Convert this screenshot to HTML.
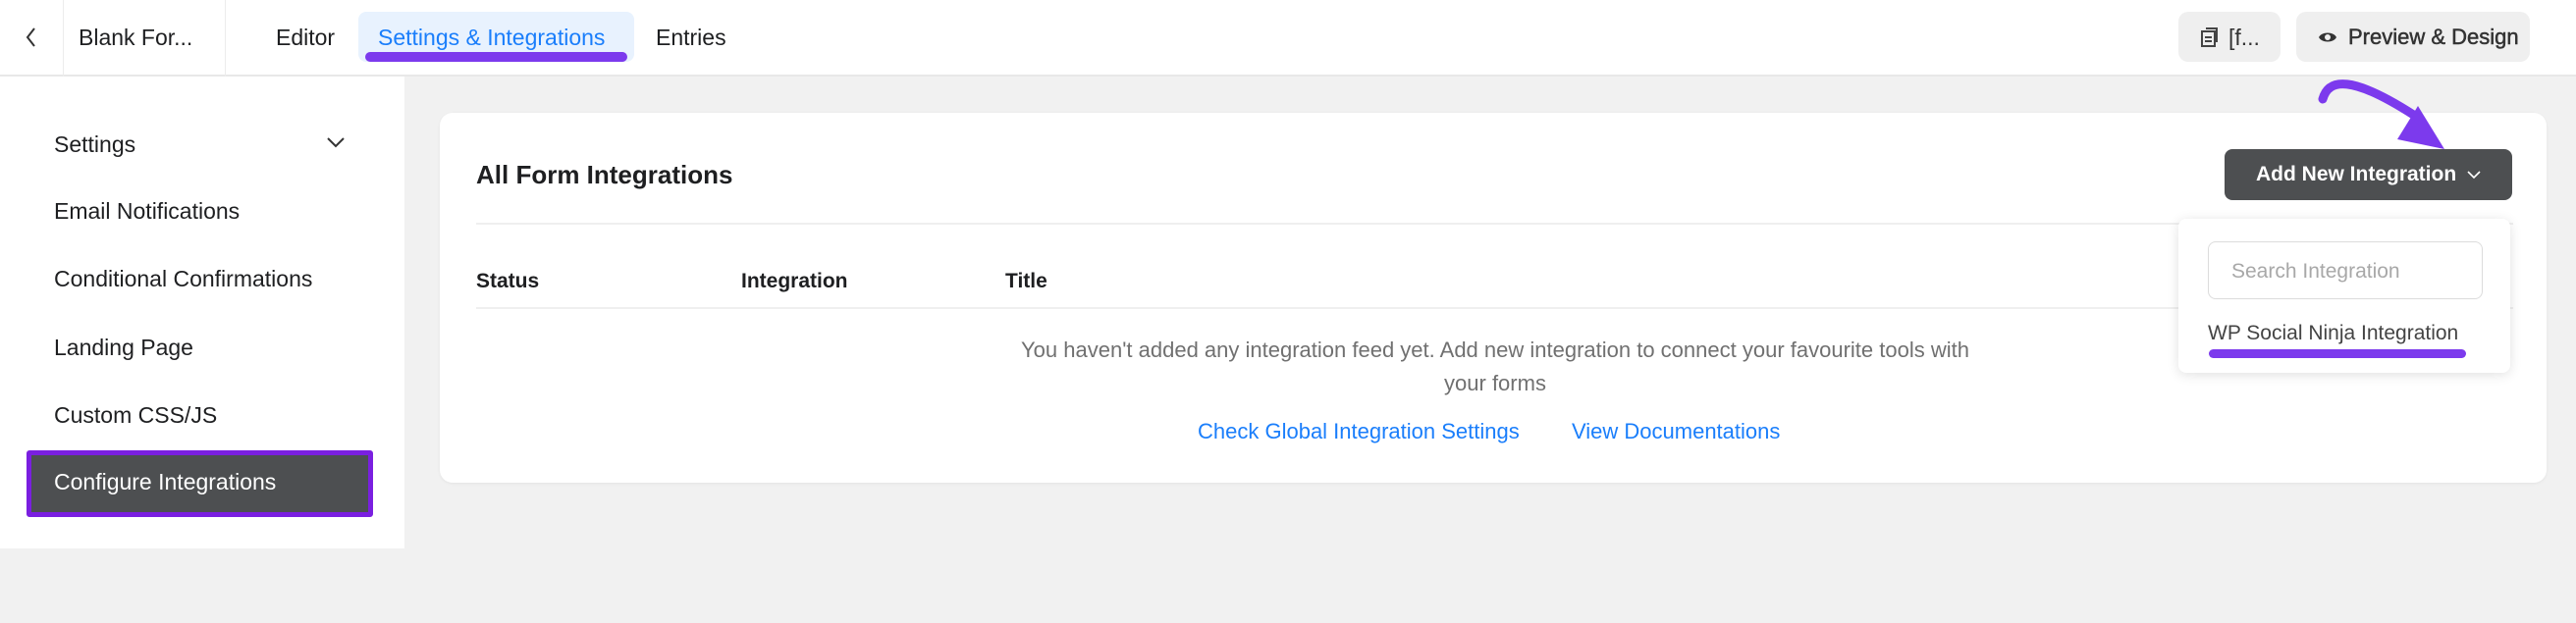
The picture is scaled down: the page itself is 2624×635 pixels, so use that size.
<!DOCTYPE html>
<html><head><meta charset="utf-8"><style>
*{box-sizing:border-box;margin:0;padding:0}
body{width:2624px;height:635px;background:#f1f1f1;font-family:"Liberation Sans",sans-serif;position:relative;overflow:hidden;color:#1e1f21}
.a{position:absolute;white-space:nowrap}
.hdr{position:absolute;left:0;top:0;width:2624px;height:78px;background:#fff;border-bottom:2px solid #e8e8e8}
.t{font-size:23px}
.side{position:absolute;left:0;top:78px;width:412px;height:481px;background:#fff}
.card{position:absolute;left:448px;top:115px;width:2146px;height:377px;background:#fff;border-radius:13px;box-shadow:0 1px 3px rgba(0,0,0,.06)}
.btn{position:absolute;background:#efefef;border-radius:10px}
</style></head><body>
<div class="hdr"></div>
<svg class="a" style="left:24px;top:26px" width="16" height="24" viewBox="0 0 16 24"><path d="M11 3 L4 12 L11 21" fill="none" stroke="#333" stroke-width="2"/></svg>
<div class="a" style="left:64px;top:0;width:1px;height:78px;background:#ececec"></div>
<div class="a" style="left:229px;top:0;width:1px;height:78px;background:#ececec"></div>
<div class="a t" style="left:80px;top:25px;color:#1e1f21">Blank For...</div>
<div class="a t" style="left:281px;top:25px">Editor</div>
<div class="a" style="left:365px;top:12px;width:281px;height:51px;background:#e8f2fe;border-radius:8px"></div>
<div class="a t" style="left:385px;top:25px;color:#1a7efb">Settings &amp; Integrations</div>
<div class="a" style="left:372px;top:53px;width:267px;height:10px;background:#7c3aed;border-radius:5px"></div>
<div class="a t" style="left:668px;top:25px">Entries</div>
<div class="btn" style="left:2219px;top:12px;width:104px;height:51px"></div>
<svg class="a" style="left:2241px;top:26px" width="22" height="24" viewBox="0 0 22 24"><rect x="2" y="6" width="13" height="15" fill="none" stroke="#444" stroke-width="2"/><path d="M6 3h11v14" fill="none" stroke="#444" stroke-width="2"/><path d="M5 12h7M5 16h7" stroke="#444" stroke-width="2"/></svg>
<div class="a t" style="left:2270px;top:25px;color:#333">[f...</div>
<div class="btn" style="left:2339px;top:12px;width:238px;height:51px"></div>
<svg class="a" style="left:2361px;top:30px" width="20" height="16" viewBox="0 0 20 16"><path d="M1 8C4 2 16 2 19 8C16 14 4 14 1 8Z" fill="#333"/><circle cx="10" cy="8" r="3" fill="#efefef"/></svg>
<div class="a t" style="left:2392px;top:25px;color:#333;font-size:22px;-webkit-text-stroke:0.5px #333">Preview &amp; Design</div>

<div class="side"></div>
<div class="a t" style="left:55px;top:134px">Settings</div>
<svg class="a" style="left:332px;top:139px" width="20" height="12" viewBox="0 0 20 12"><path d="M2 2L10 10L18 2" fill="none" stroke="#333" stroke-width="2"/></svg>
<div class="a t" style="left:55px;top:202px">Email Notifications</div>
<div class="a t" style="left:55px;top:271px">Conditional Confirmations</div>
<div class="a t" style="left:55px;top:341px">Landing Page</div>
<div class="a t" style="left:55px;top:410px">Custom CSS/JS</div>
<div class="a" style="left:27px;top:459px;width:353px;height:68px;background:#4d4f51;border:5px solid #7a1fe0;border-radius:3px"></div>
<div class="a t" style="left:55px;top:478px;color:#fff">Configure Integrations</div>

<div class="card"></div>
<div class="a" style="left:485px;top:163px;font-size:26px;font-weight:bold">All Form Integrations</div>
<div class="a" style="left:485px;top:227px;width:2075px;height:2px;background:#efefef"></div>
<div class="a" style="left:485px;top:275px;font-size:21px;font-weight:bold">Status</div>
<div class="a" style="left:755px;top:275px;font-size:21px;font-weight:bold">Integration</div>
<div class="a" style="left:1024px;top:275px;font-size:21px;font-weight:bold">Title</div>
<div class="a" style="left:485px;top:313px;width:2075px;height:2px;background:#efefef"></div>
<div class="a" style="left:1033px;top:340px;width:980px;text-align:center;white-space:normal;font-size:22px;line-height:34px;color:#707070">You haven't added any integration feed yet. Add new integration to connect your favourite tools with your forms</div>
<div class="a" style="left:1220px;top:427px;font-size:22px;color:#1a7efb">Check Global Integration Settings</div>
<div class="a" style="left:1601px;top:427px;font-size:22px;color:#1a7efb">View Documentations</div>

<div class="a" style="left:2266px;top:152px;width:293px;height:52px;background:#4d4f51;border-radius:8px"></div>
<div class="a" style="left:2298px;top:166px;font-size:21px;font-weight:bold;color:#fff">Add New Integration</div>
<svg class="a" style="left:2512px;top:173px" width="16" height="10" viewBox="0 0 16 10"><path d="M2 2L8 8L14 2" fill="none" stroke="#fff" stroke-width="1.6"/></svg>

<div class="a" style="left:2219px;top:223px;width:338px;height:157px;background:#fff;border-radius:8px;box-shadow:0 2px 12px rgba(0,0,0,.12)"></div>
<div class="a" style="left:2249px;top:246px;width:280px;height:59px;border:1px solid #dcdcdc;border-radius:8px"></div>
<div class="a" style="left:2273px;top:265px;font-size:21px;color:#a8a8a8">Search Integration</div>
<div class="a" style="left:2249px;top:328px;font-size:21px;color:#444">WP Social Ninja Integration</div>
<div class="a" style="left:2250px;top:356px;width:262px;height:9px;background:#7c3aed;border-radius:5px"></div>

<svg class="a" style="left:0;top:0" width="2624" height="200" viewBox="0 0 2624 200"><path d="M2366 101C2372 80 2395 76 2460 118" fill="none" stroke="#7c3aed" stroke-width="9" stroke-linecap="round"/><path d="M2463 108L2442 142L2490 152Z" fill="#7c3aed"/></svg>
</body></html>
